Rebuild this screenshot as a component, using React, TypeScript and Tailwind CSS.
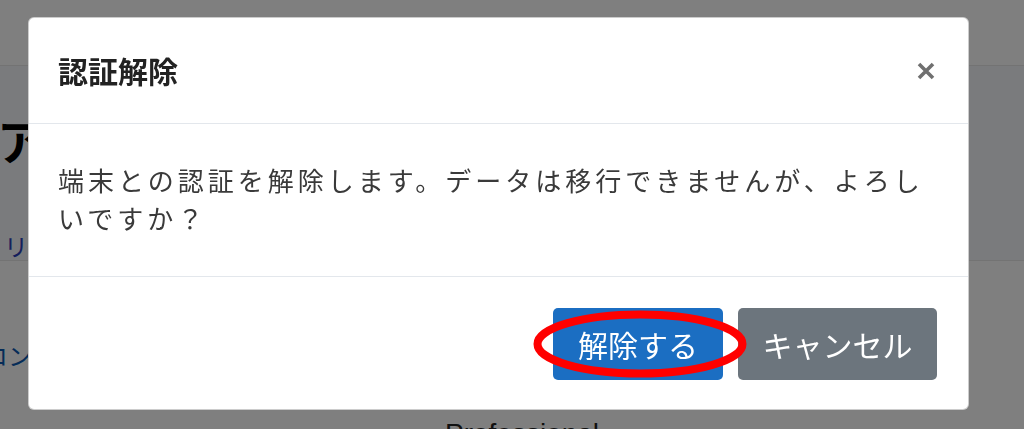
const jp = { fontFamily: '"Noto Sans CJK JP", "Noto Sans", sans-serif' }

const App = () => {
  return (
    <div className="relative h-screen overflow-hidden bg-white" style={jp}>
      {/* page behind the dialog */}
      <div className="h-[66px] border-b border-[#e6e6e6] bg-white" />
      <div className="h-[195px] border-b border-[#e6e6e6] bg-[#f4f6fa] pt-[44px]">
        <h1 className="ml-[-3px] text-[48px] leading-[58px] font-bold text-black">
          アカウント設定
        </h1>
        <p className="mt-[60px] ml-[4px] text-[24px] leading-[36px] text-[#2a3fb8]">
          リンク
        </p>
      </div>
      <p className="mt-[76px] ml-[-16px] text-[24px] leading-[36px] text-[#0a58b0]">
        コンテンツ
      </p>
      <p
        className="mt-[40px] text-center text-[28px] leading-[42px] text-[#222]"
        style={{ fontFamily: '"Liberation Sans", sans-serif', paddingLeft: 20 }}
      >
        Professional
      </p>

      {/* backdrop + modal */}
      <div className="fixed inset-0 bg-black/50">
        <div className="pt-[17px] pl-[28px]">
          <div className="w-[941px] rounded-[6px] border border-black/20 bg-white">
            <div className="flex items-center justify-between border-b border-[#e3e7ec] pt-[30px] pb-[30px] pl-[29px] pr-[33px]">
              <h5 className="text-[30px] leading-[45px] font-bold text-[#222]">認証解除</h5>
              <svg width="18" height="18" viewBox="0 0 18 18" className="mt-[1px]">
                <path d="M2 2 L16 16 M16 2 L2 16" stroke="#707070" strokeWidth="3.6" strokeLinecap="butt" />
              </svg>
            </div>
            <div className="border-b border-[#e3e7ec] pt-[37px] pb-[39px] px-[29px]">
              <p className="text-[26px] leading-[38px] tracking-[4px] text-[#3a3a3a]">
                端末との認証を解除します。データは移行できませんが、よろしいですか？
              </p>
            </div>
            <div className="flex justify-end gap-[15px] pt-[31px] pb-[29px] pr-[31px]">
              <button className="flex h-[72px] w-[170px] items-center justify-center rounded-[5px] bg-[#1b6ec2] text-[30px] text-white">
                解除する
              </button>
              <button className="flex h-[72px] w-[199px] items-center justify-center rounded-[5px] bg-[#6c757d] text-[30px] text-white">
                キャンセル
              </button>
            </div>
          </div>
        </div>
      </div>

      {/* red annotation ring */}
      <svg className="absolute left-[529px] top-[306px]" width="222" height="76" viewBox="0 0 222 76">
        <ellipse cx="111" cy="38" rx="102.5" ry="29.5" fill="none" stroke="#ff0000" strokeWidth="8" />
      </svg>
    </div>
  )
}

export default App
